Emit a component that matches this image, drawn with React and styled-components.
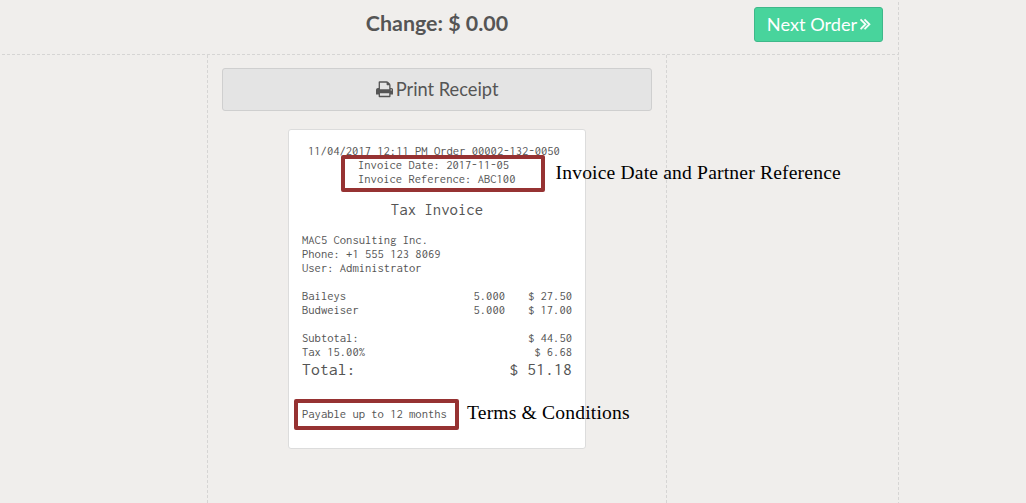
import React from "react";
import styled, { createGlobalStyle } from "styled-components";

const GlobalStyle = createGlobalStyle`
  * { box-sizing: border-box; }
  body {
    margin: 0;
    background: #f0eeec;
    color: #555;
    font-family: Lato, sans-serif;
    overflow: hidden;
  }
`;

const dash = "#d6d5d4";
const horizontalDash = `repeating-linear-gradient(90deg, ${dash} 0 3px, transparent 3px 5px)`;
const verticalDash = `repeating-linear-gradient(180deg, ${dash} 0 3px, transparent 3px 5px)`;

const Page = styled.div`
  width: 899px;
  height: 503px;
  padding-top: 2px;
  background: ${verticalDash} 898px 2px / 1px 100% no-repeat;
`;

const TopBar = styled.header`
  height: 53px;
  display: grid;
  grid-template-columns: 208px 458px 1fr;
  background: ${horizontalDash} 2px 100% / 100% 1px no-repeat;
`;

const Title = styled.h1`
  grid-column: 2;
  margin: 0;
  padding-top: 5px;
  font-size: 21.4px;
  line-height: 33px;
  font-weight: 700;
  text-align: center;
  white-space: nowrap;
`;

const NextButton = styled.button`
  justify-self: end;
  margin: 5px 16px 0 0;
  width: 129px;
  height: 35px;
  padding: 0 0 1px 1px;
  display: flex;
  align-items: center;
  justify-content: center;
  gap: 3px;
  border: 1px solid #3fb88a;
  border-radius: 3px;
  background: #48d49c;
  color: #fff;
  font: 400 18.2px/22px Lato, sans-serif;
`;

const Columns = styled.main`
  display: grid;
  grid-template-columns: 207px 460px 1fr;
  height: 448px;
`;

const Center = styled.section`
  grid-column: 2;
  padding: 13px 15px 0;
  display: flex;
  flex-direction: column;
  align-items: center;
  background:
    ${verticalDash} 0 0 / 1px 100% no-repeat,
    ${verticalDash} 459px 0 / 1px 100% no-repeat;
`;

const PrintButton = styled.button`
  width: 430px;
  height: 43px;
  padding: 0 0 1px;
  display: flex;
  align-items: center;
  justify-content: center;
  gap: 3px;
  border: 1px solid #cfcfcf;
  border-radius: 3px;
  background: #e4e4e4;
  color: #555;
  font: 400 18.25px/22px Lato, sans-serif;
`;

const Icon = styled.svg`
  width: ${(p) => p.$w}px;
  height: 18.5px;
  margin-top: ${(p) => p.$drop || 0}px;
  fill: currentColor;
  flex: none;
`;

const Receipt = styled.article`
  position: relative;
  width: 298px;
  height: 320px;
  margin-top: 18px;
  padding: 14px 13px 0;
  border: 1px solid #dcdcdc;
  border-radius: 3px;
  background: #fff;
  font-family: Inconsolata, "DejaVu Sans Mono", monospace;
  font-size: 12.6px;
  line-height: 14px;
  white-space: pre;
`;

const OrderLine = styled.div`
  margin: 0 -2px 0 6px;
`;

const InvoiceDetails = styled.div`
  margin-left: 56px;
`;

const Heading = styled.h2`
  margin: 14px 0 13px;
  font-size: 16.8px;
  line-height: 20px;
  font-weight: 400;
  text-align: center;
`;

const Block = styled.div`
  margin-bottom: 14px;
`;

const Row = styled.div`
  display: grid;
  grid-template-columns: 1fr auto 67px;
`;

const Amount = styled.span`
  text-align: right;
`;

const Total = styled.div`
  display: flex;
  justify-content: space-between;
  font-size: 17.6px;
  letter-spacing: 0.15px;
  line-height: 21px;
`;

const Terms = styled.div`
  margin-top: 27px;
`;

const Highlight = styled.div`
  position: absolute;
  left: ${(p) => p.$x}px;
  top: ${(p) => p.$y}px;
  width: ${(p) => p.$w}px;
  height: ${(p) => p.$h}px;
  border: 4px solid #963232;
  border-radius: 2px;
`;

const Note = styled.div`
  position: absolute;
  left: ${(p) => p.$x}px;
  top: ${(p) => p.$y}px;
  color: #000;
  font: 19.6px/24px "Liberation Serif", serif;
  letter-spacing: 0.17px;
  white-space: nowrap;
`;

const PrintIcon = () => (
  <Icon $w={17.2} viewBox="64 0 1664 1792" aria-hidden="true">
    <path d="M448 1536h896v-256h-896v256zm0-640h896v-384h-160q-40 0-68-28t-28-68v-160h-640v640zm1152 64q0-26-19-45t-45-19-45 19-19 45 19 45 45 19 45-19 19-45zm128 0v416q0 13-9.5 22.5t-22.5 9.5h-224v160q0 40-28 68t-68 28h-960q-40 0-68-28t-28-68v-160h-224q-13 0-22.5-9.5t-9.5-22.5v-416q0-79 56.5-135.5t135.5-56.5h64v-544q0-40 28-68t68-28h672q40 0 88 20t76 48l152 152q28 28 48 76t20 88v256h64q79 0 135.5 56.5t56.5 135.5z" />
  </Icon>
);

const DoubleArrowIcon = () => (
  <Icon $w={11} $drop={1} viewBox="500 64 1060 1792" aria-hidden="true">
    <path
      stroke="currentColor"
      strokeWidth="50"
      d="M1107 960q0 13-10 23l-466 466q-10 10-23 10t-23-10l-50-50q-10-10-10-23t10-23l393-393-393-393q-10-10-10-23t10-23l50-50q10-10 23-10t23 10l466 466q10 10 10 23zm384 0q0 13-10 23l-466 466q-10 10-23 10t-23-10l-50-50q-10-10-10-23t10-23l393-393-393-393q-10-10-10-23t10-23l50-50q10-10 23-10t23 10l466 466q10 10 10 23z"
    />
  </Icon>
);

const items = [
  ["Baileys", "5.000", "$ 27.50"],
  ["Budweiser", "5.000", "$ 17.00"],
];

const sums = [
  ["Subtotal:", "$ 44.50"],
  ["Tax 15.00%", "$ 6.68"],
];

export default function App() {
  return (
    <Page>
      <GlobalStyle />
      <TopBar>
        <Title>Change: $ 0.00</Title>
        <NextButton>
          <span>Next Order</span>
          <DoubleArrowIcon />
        </NextButton>
      </TopBar>
      <Columns>
        <Center>
          <PrintButton>
            <PrintIcon />
            <span>Print Receipt</span>
          </PrintButton>
          <Receipt>
            <OrderLine>11/04/2017 12:11 PM Order 00002-132-0050</OrderLine>
            <InvoiceDetails>
              <div>Invoice Date: 2017-11-05</div>
              <div>Invoice Reference: ABC100</div>
            </InvoiceDetails>
            <Heading>Tax Invoice</Heading>
            <Block>
              <div>MAC5 Consulting Inc.</div>
              <div>Phone: +1 555 123 8069</div>
              <div>User: Administrator</div>
            </Block>
            <Block>
              {items.map(([name, qty, price]) => (
                <Row key={name}>
                  <span>{name}</span>
                  <span>{qty}</span>
                  <Amount>{price}</Amount>
                </Row>
              ))}
            </Block>
            {sums.map(([name, price]) => (
              <Row key={name}>
                <span>{name}</span>
                <span />
                <Amount>{price}</Amount>
              </Row>
            ))}
            <Total>
              <span>Total:</span>
              <span>$ 51.18</span>
            </Total>
            <Terms>Payable up to 12 months</Terms>
            <Highlight $x={52} $y={25} $w={204} $h={37} />
            <Highlight $x={5} $y={269} $w={165} $h={31} />
            <Note $x={266.5} $y={31}>Invoice Date and Partner Reference</Note>
            <Note $x={178} $y={271}>Terms &amp; Conditions</Note>
          </Receipt>
        </Center>
      </Columns>
    </Page>
  );
}
